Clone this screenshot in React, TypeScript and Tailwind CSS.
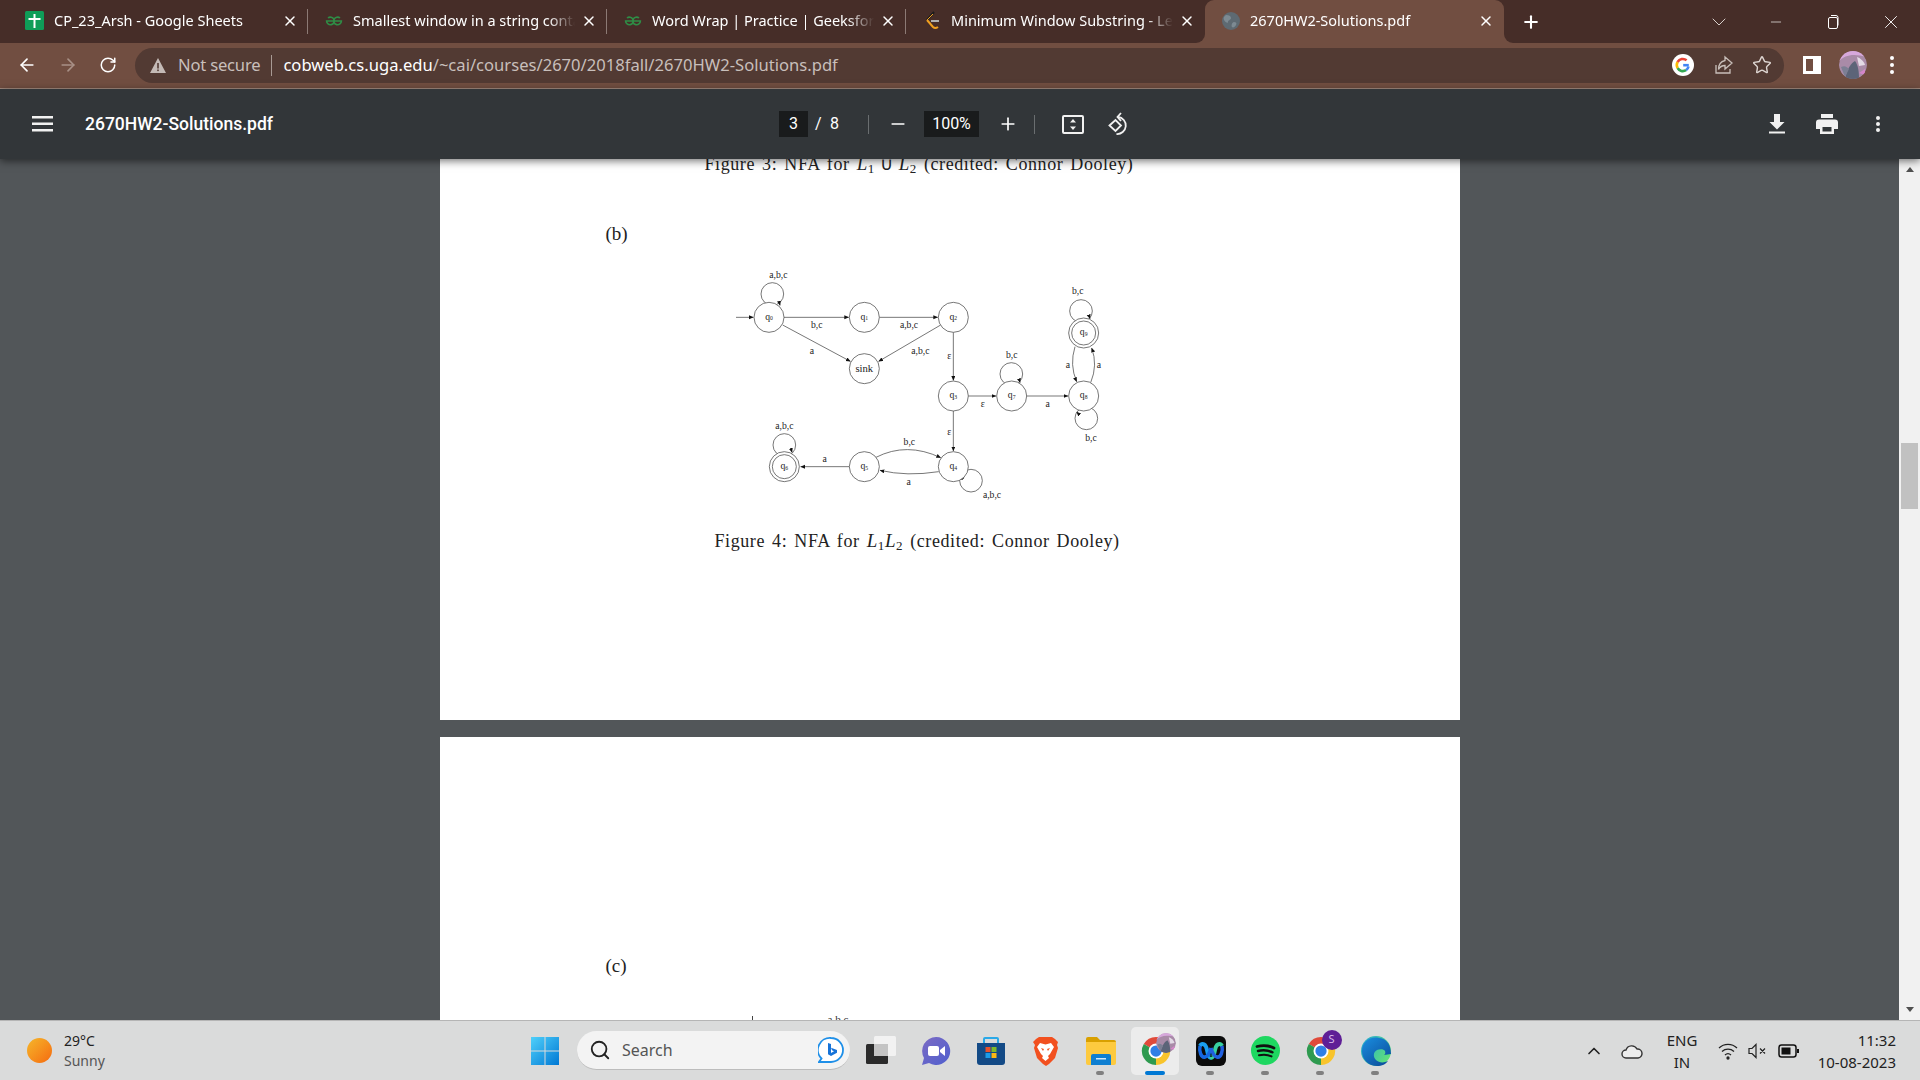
import { ArrowLeft, ArrowRight, RotateCw, Star, Minus, Plus, X, ChevronDown, ChevronUp, Search } from "lucide-react";

const uiFont = "font-['Noto_Sans',sans-serif]";
const pdfFont = "font-['Liberation_Serif',serif]";

const SheetsIcon = () => (
  <svg width="19" height="19" viewBox="0 0 19 19">
    <rect width="19" height="19" rx="1.5" fill="#0f9d58" />
    <path d="M8.5 3h2v4h5v2h-5v8h-2V9h-5V7h5z" fill="#fff" />
  </svg>
);

const GfgIcon = () => (
  <svg width="18" height="10" viewBox="0 0 18 10" fill="none" stroke="#2f8d46" strokeWidth="1.6">
    <path d="M9 5h7.4A3.8 3.8 0 1 1 15 2" />
    <path d="M9 5H1.6A3.8 3.8 0 1 0 3 2" />
  </svg>
);

const LeetIcon = () => (
  <svg width="18" height="22" viewBox="0 0 18 22" fill="none" strokeWidth="2">
    <path d="M11 2 4 10" stroke="#1c1c1c" />
    <path d="M4 10l6 7c1.500 1.500 3 1.500 5 0" stroke="#f0a020" />
    <path d="M8 11h8" stroke="#b0b0b0" />
    <path d="M4 10 10 4" stroke="#f0a020" strokeWidth="1" />
  </svg>
);

const GlobeIcon = () => (
  <svg width="18" height="18" viewBox="0 0 18 18">
    <circle cx="9" cy="9" r="9" fill="#5e6a72" />
    <path d="M4 3c3 0 5 1 5 3s-3 2-3 4-3 0-4-2 0-4 2-5zm8 7c2 0 3 1 2 3s-3 3-4 2 0-5 2-5z" fill="#7d8a92" />
  </svg>
);

const tabs = [
  { title: "CP_23_Arsh - Google Sheets", icon: <SheetsIcon /> },
  { title: "Smallest window in a string containing", icon: <GfgIcon /> },
  { title: "Word Wrap | Practice | GeeksforGeeks", icon: <GfgIcon /> },
  { title: "Minimum Window Substring - LeetCode", icon: <LeetIcon /> },
  { title: "2670HW2-Solutions.pdf", icon: <GlobeIcon />, active: true },
];

const Tab = ({ tab, last }: any) => (
  <div className={`relative flex items-center w-[299px] h-[43px] pl-[16px] pb-[2px] ${tab.active ? "bg-[#714e41] rounded-t-[9px]" : ""}`}>
    {tab.active && (
      <>
        <div className="absolute -left-[9px] bottom-0 w-[9px] h-[9px] bg-[#714e41]">
          <div className="w-full h-full bg-[#462d28] rounded-br-[9px]" />
        </div>
        <div className="absolute -right-[9px] bottom-0 w-[9px] h-[9px] bg-[#714e41]">
          <div className="w-full h-full bg-[#462d28] rounded-bl-[9px]" />
        </div>
      </>
    )}
    <div className="w-[19px] flex justify-center shrink-0">{tab.icon}</div>
    <div className="ml-[10px] w-[222px] overflow-hidden whitespace-nowrap text-[14.5px] text-white [mask-image:linear-gradient(to_right,black_88%,transparent)]">
      {tab.title}
    </div>
    <X size={16} strokeWidth={2.2} className="ml-[6px] text-white shrink-0" />
    {!tab.active && !last && <div className="absolute right-0 top-[9px] h-[25px] w-px bg-[#8c7a75]" />}
  </div>
);

const GoogleG = () => (
  <svg width="22" height="22" viewBox="0 0 22 22">
    <circle cx="11" cy="11" r="11" fill="#fff" />
    <path d="M16.800 11.200h-5.600" stroke="#4285f4" strokeWidth="2.600" />
    <path d="M16.500 12.500a6 6 0 0 1-2.500 3.700" stroke="#4285f4" strokeWidth="2.600" fill="none" />
    <path d="M14 16.200a6 6 0 0 1-8.400-2.200" stroke="#34a853" strokeWidth="2.600" fill="none" />
    <path d="M5.600 14a6 6 0 0 1 0-6" stroke="#fbbc05" strokeWidth="2.600" fill="none" />
    <path d="M5.600 8a6 6 0 0 1 9-1.700" stroke="#ea4335" strokeWidth="2.600" fill="none" />
  </svg>
);

const ChromeLogo = ({ size = 30 }: { size?: number }) => (
  <svg width={size} height={size} viewBox="0 0 32 32">
    <path d="M16 16 3 8.500A15 15 0 0 1 29 8.500Z" fill="#e04a3a" />
    <path d="M16 16 29 8.500A15 15 0 0 1 16 31Z" fill="#f8c42c" />
    <path d="M16 16 16 31A15 15 0 0 1 3 8.500Z" fill="#2e9a4f" />
    <circle cx="16" cy="16" r="8" fill="#fff" />
    <circle cx="16" cy="16" r="6" fill="#2f7fe6" />
  </svg>
);

const Avatar = ({ size }: { size: number }) => (
  <svg width={size} height={size} viewBox="0 0 28 28" className="rounded-full">
    <circle cx="14" cy="14" r="14" fill="#a98ba8" />
    <path d="M0 10C6 4 14 2 28 6V0H0z" fill="#d7a8dc" />
    <path d="M6 28C8 18 12 12 16 10c3 4 4 10 4 18z" fill="#5c6478" />
    <path d="M2 16c4-2 6 0 8 2l-4 8z" fill="#7c7f94" />
    <path d="M18 6c3 1 7 4 8 8l-6 1z" fill="#e3dbe6" />
    <path d="M20 22l6-4v6z" fill="#d486c9" />
  </svg>
);

// nfa drawing, coords are 3x the screen size
const edges = [
  "M108 202H160",
  "M252 202H446",
  "M538 202H713",
  "M248 225L451 334",
  "M722 225L536 334",
  "M760 247V391",
  "M805 438H888",
  "M980 438H1104",
  "M760 483V603",
  "M448 650H302",
  "M528 622Q620 575 722 623",
  "M716 665Q620 680 540 661",
  "M1125 290Q1108 345 1130 395",
  "M1172 398Q1194 345 1175 294",
];

const loops = [
  { cx: 217, cy: 132, end: "M238 158L240 166" },
  { cx: 1143, cy: 183, end: "M1168 200L1170 206" },
  { cx: 934, cy: 372, end: "M958 390L960 398" },
  { cx: 1159, cy: 505, end: "M1136 492L1130 486" },
  { cx: 813, cy: 692, end: "M786 684L780 678" },
  { cx: 253, cy: 585, end: "M274 600L276 607" },
];

const states = [
  { x: 207, y: 202, n: "0" },
  { x: 493, y: 202, n: "1" },
  { x: 760, y: 202, n: "2" },
  { x: 760, y: 438, n: "3" },
  { x: 760, y: 650, n: "4" },
  { x: 493, y: 650, n: "5" },
  { x: 253, y: 650, n: "6", double: true },
  { x: 935, y: 438, n: "7" },
  { x: 1151, y: 438, n: "8" },
  { x: 1151, y: 249, n: "9", double: true },
];

const labels = [
  ["a,b,c", 235, 85],
  ["b,c", 350, 233],
  ["a", 336, 312],
  ["a,b,c", 627, 233],
  ["a,b,c", 661, 312],
  ["ε", 748, 328],
  ["ε", 848, 470],
  ["a", 1043, 470],
  ["b,c", 935, 324],
  ["b,c", 1133, 132],
  ["a", 1104, 353],
  ["a", 1197, 353],
  ["b,c", 1173, 572],
  ["ε", 748, 555],
  ["b,c", 628, 584],
  ["a", 626, 705],
  ["a", 374, 636],
  ["a,b,c", 253, 537],
  ["a,b,c", 876, 745],
];

const NfaDiagram = () => (
  <svg width="440" height="260" viewBox="0 0 1320 780" className="block">
    <defs>
      <marker id="head" markerUnits="userSpaceOnUse" markerWidth="16" markerHeight="14" refX="13" refY="6" orient="auto">
        <path d="M0 0L14 6L0 12z" fill="#111" />
      </marker>
    </defs>
    <g fill="none" stroke="#444" strokeWidth="2.200">
      {loops.map((l) => (
        <circle key={l.cx} cx={l.cx} cy={l.cy} r="34" />
      ))}
      {loops.map((l) => (
        <path key={l.end} d={l.end} markerEnd="url(#head)" />
      ))}
      {edges.map((d) => (
        <path key={d} d={d} markerEnd="url(#head)" />
      ))}
    </g>
    <circle cx="493" cy="356" r="45" fill="#fff" stroke="#444" strokeWidth="2.200" />
    <text x="493" y="366" textAnchor="middle" fontSize="32" fill="#222" fontFamily="Liberation Serif">sink</text>
    {states.map((s) => (
      <g key={s.n}>
        <circle cx={s.x} cy={s.y} r="45" fill="#fff" stroke="#444" strokeWidth="2.200" />
        {s.double && <circle cx={s.x} cy={s.y} r="36" fill="#fff" stroke="#444" strokeWidth="2.200" />}
        <text x={s.x} y={s.y + 7} textAnchor="middle" fontSize="29" fill="#222" fontFamily="Liberation Serif">
          q<tspan fontSize="17" dy="2">{s.n}</tspan>
        </text>
      </g>
    ))}
    {labels.map(([t, x, y]: any, i) => (
      <text key={i} x={x} y={y} textAnchor="middle" fontSize="29" fill="#222" fontFamily="Liberation Serif">
        {t}
      </text>
    ))}
  </svg>
);

const Caption = ({ n, children, className }: any) => (
  <div className={`${pdfFont} text-[18px] leading-[22px] text-[#222] whitespace-nowrap tracking-[0.58px] [word-spacing:2px] ${className}`}>
    Figure {n}: NFA for {children} (credited: Connor Dooley)
  </div>
);

const Ell = ({ n }: { n: number }) => (
  <span>
    <i className="text-[19px]">L</i>
    <sub className="text-[13px] bottom-[-3px]">{n}</sub>
  </span>
);

const WinLogo = () => (
  <svg width="30" height="30" viewBox="0 0 30 30">
    <defs>
      <linearGradient id="win" x1="0" y1="0" x2="1" y2="1">
        <stop offset="0" stopColor="#4fd0fa" />
        <stop offset="1" stopColor="#0078d4" />
      </linearGradient>
    </defs>
    <path d="M1 1h13.500v13.500H1zM15.500 1H29v13.500H15.500zM1 15.500h13.500V29H1zM15.500 15.500H29V29H15.500z" fill="url(#win)" />
  </svg>
);

const BingIcon = () => (
  <svg width="26" height="26" viewBox="0 0 26 26">
    <path d="M13 1a12 12 0 0 1 0 24H1l2.500-3.500A12 12 0 0 1 13 1z" fill="#fff" stroke="#1e8fe8" strokeWidth="1.800" />
    <path d="M10 6l3 1v9l3-1.800-2-1-1-2.500 6 2.200v2.800L13 19l-3-1.800z" fill="#1673d8" />
  </svg>
);

const TaskView = () => (
  <svg width="30" height="29" viewBox="0 0 30 29">
    <rect x="0" y="8" width="22" height="20" rx="1.500" fill="#2b2b2b" />
    <rect x="8" y="0" width="22" height="20" rx="1.500" fill="#f6f6f6" fillOpacity="0.85" />
    <rect x="8" y="8" width="14" height="12" fill="#c4c4c4" />
  </svg>
);

const MeetIcon = () => (
  <svg width="30" height="30" viewBox="0 0 30 30">
    <defs>
      <linearGradient id="meet" x1="0" y1="0" x2="1" y2="1">
        <stop offset="0" stopColor="#7c6bc4" />
        <stop offset="1" stopColor="#4f5fce" />
      </linearGradient>
    </defs>
    <path d="M15 1a14 14 0 1 1-7 26l-7 2 2-7A14 14 0 0 1 15 1z" fill="url(#meet)" />
    <rect x="7" y="10" width="11" height="10" rx="2" fill="#fff" />
    <path d="M19 14l5-4v10l-5-4z" fill="#fff" />
  </svg>
);

const StoreIcon = () => (
  <svg width="30" height="30" viewBox="0 0 30 30">
    <path d="M8 7V3a1 1 0 0 1 1-1h12a1 1 0 0 1 1 1v4" fill="none" stroke="#2aa9e8" strokeWidth="2" />
    <path d="M1 7h28v19a3 3 0 0 1-3 3H4a3 3 0 0 1-3-3z" fill="#134a86" />
    <rect x="9.500" y="11" width="5" height="5" fill="#e8512b" />
    <rect x="15.500" y="11" width="5" height="5" fill="#7fba2c" />
    <rect x="9.500" y="17" width="5" height="5" fill="#1a9be8" />
    <rect x="15.500" y="17" width="5" height="5" fill="#fdb813" />
  </svg>
);

const BraveIcon = () => (
  <svg width="27" height="30" viewBox="0 0 27 30">
    <path d="M7 1h13l3 2 3 3-1 3 1 3-3 10-6 6-3 2-3-2-6-6L2 12l1-3-2-3 3-3z" fill="#f2501f" />
    <path d="M8 7l5.500 1.500L19 7l3 4-4 7-2 2 1 2-3.500 3L10 22l1-2-2-2-4-7z" fill="#fff" />
    <path d="M9 12l3 1-1 2zM18 12l-3 1 1 2z" fill="#f2501f" />
  </svg>
);

const FilesIcon = () => (
  <svg width="30" height="28" viewBox="0 0 30 28">
    <path d="M0 2a2 2 0 0 1 2-2h9l3 3h14a2 2 0 0 1 2 2v3H0z" fill="#d9a000" />
    <path d="M0 5h30v21a2 2 0 0 1-2 2H2a2 2 0 0 1-2-2z" fill="#fdca3f" />
    <path d="M5 19a2 2 0 0 1 2-2h16a2 2 0 0 1 2 2v9H5z" fill="#0f7fd1" />
    <rect x="10" y="21" width="10" height="1.500" fill="#cfe8fb" />
  </svg>
);

const WebexIcon = () => (
  <svg width="30" height="30" viewBox="0 0 30 30">
    <rect width="30" height="30" rx="6" fill="#0b0b0b" />
    <path d="M4 10c2-4 6-2 7 4s3 9 4 7" fill="none" stroke="#1aa0f0" strokeWidth="4" />
    <path d="M26 10c-2-4-6-2-7 4s-3 9-4 7" fill="none" stroke="#38d0a0" strokeWidth="4" />
    <path d="M4 10c-1 5 1 12 5 11s5-6 6-9" fill="none" stroke="#1668e0" strokeWidth="3.500" />
    <path d="M26 10c1 5-1 12-5 11s-5-6-6-9" fill="none" stroke="#2060e0" strokeWidth="3.500" />
  </svg>
);

const SpotifyIcon = () => (
  <svg width="29" height="29" viewBox="0 0 29 29">
    <circle cx="14.500" cy="14.500" r="14.500" fill="#1ed760" />
    <g fill="none" stroke="#111" strokeLinecap="round">
      <path d="M6 10.500c6-1.500 12-1 17 1.500" strokeWidth="2.800" />
      <path d="M7 15c5-1.200 10-.8 14.500 1.300" strokeWidth="2.400" />
      <path d="M8 19.300c4.500-1 9-.6 12.500 1.100" strokeWidth="2" />
    </g>
  </svg>
);

const EdgeIcon = () => (
  <svg width="30" height="30" viewBox="0 0 30 30">
    <defs>
      <linearGradient id="edgeA" x1="0" y1="0" x2="1" y2="0.600">
        <stop offset="0" stopColor="#1fa5d8" />
        <stop offset="1" stopColor="#5fe07a" />
      </linearGradient>
      <linearGradient id="edgeB" x1="0" y1="0" x2="0.800" y2="1">
        <stop offset="0" stopColor="#1a8ee0" />
        <stop offset="1" stopColor="#0c4f9c" />
      </linearGradient>
    </defs>
    <circle cx="15" cy="15" r="15" fill="url(#edgeA)" />
    <path d="M1 15C1 24 8 30 16 30c5 0 9-2 11-5-4 2-9 2-12-1s-3-8 1-10c3-1.500 7-1 8 1 1 3-1 4-1 4l7-1C30 7 24 2 18 2 9 0 1 6 1 15z" fill="url(#edgeB)" />
  </svg>
);

const TaskSlot = ({ children, dot, active }: any) => (
  <div className="relative w-[55px] h-[59px] flex items-center justify-center shrink-0">
    {active && <div className="absolute left-[3px] top-[6px] w-[48px] h-[48px] rounded-[5px] bg-[#ececec]" />}
    <div className="relative">{children}</div>
    {dot && !active && <div className="absolute left-[23px] bottom-[5px] w-[8px] h-[4px] rounded-full bg-[#808080]" />}
    {active && <div className="absolute left-[17px] bottom-[5px] w-[20px] h-[4px] rounded-full bg-[#0078d4]" />}
  </div>
);

export default function App() {
  return (
    <div className={`w-[1920px] h-[1080px] overflow-hidden flex flex-col ${uiFont}`}>
      {/* Tab strip */}
      <div className="h-[43px] bg-[#462d28] flex items-center pl-[9px] shrink-0">
        {tabs.map((t, i) => (
          <Tab key={t.title} tab={t} last={i === 3} />
        ))}
        <Plus size={20} strokeWidth={2.5} className="ml-[17px] text-white" />
        <ChevronDown size={24} strokeWidth={1} className="ml-[166px] text-[#d8cfcb]" />
        <Minus size={16} strokeWidth={1} className="ml-[37px] text-white" />
        <svg width="14" height="14" viewBox="0 0 14 14" fill="none" stroke="#fff" className="ml-[42px]">
          <rect x="2.500" y="2.500" width="9" height="11" rx="1.500" />
          <path d="M5 .5h5a2 2 0 0 1 2 2v8" />
        </svg>
        <X size={22} strokeWidth={1} className="ml-[40px] text-white" />
      </div>

      {/* Address bar */}
      <div className="h-[46px] bg-[#714e41] border-b border-[#a48c80] flex items-center shrink-0 pb-[1px]">
        <ArrowLeft size={20} strokeWidth={2} className="ml-[17px] text-white" />
        <ArrowRight size={20} strokeWidth={2} className="ml-[21px] text-[#a89086]" />
        <RotateCw size={18} strokeWidth={2} className="ml-[21px] text-white" />
        <div className="ml-[18px] w-[1649px] h-[35px] rounded-full bg-[#523a33] flex items-center pl-[15px] pr-[12px]">
          <svg width="16" height="15" viewBox="0 0 16 15">
            <path d="M8 0l8 15H0z" fill="#c4bab6" />
            <rect x="7.200" y="5" width="1.600" height="5.500" fill="#523a33" />
            <rect x="7.200" y="11.500" width="1.600" height="1.600" fill="#523a33" />
          </svg>
          <span className="ml-[12px] text-[16.6px] text-[#c8bfbb] tracking-[-0.2px]">Not secure</span>
          <div className="ml-[11px] w-px h-[21px] bg-[#a89a94]" />
          <span className="ml-[11px] text-[16.6px] text-white whitespace-nowrap">
            cobweb.cs.uga.edu<span className="text-[#c8bfbb]">/~cai/courses/2670/2018fall/2670HW2-Solutions.pdf</span>
          </span>
          <div className="ml-auto flex items-center gap-[18px]">
            <GoogleG />
            <svg width="22" height="22" viewBox="0 0 22 22" fill="none" stroke="#c9bfba" strokeWidth="1.300">
              <path d="M4 11v8h14v-4" />
              <path d="M13 3l7 6-7 6v-3.500c-3 0-5 1-6.500 4 0-5 2.500-8 6.500-9z" />
            </svg>
            <Star size={20} strokeWidth={1.700} className="text-[#ddd5d1]" />
          </div>
        </div>
        <svg width="18" height="18" viewBox="0 0 18 18" className="ml-[19px]">
          <path d="M0 0h18v18H0z" fill="#fff" />
          <rect x="3" y="3" width="7" height="12" fill="#714e41" />
        </svg>
        <div className="ml-[18px] h-[28px]"><Avatar size={28} /></div>
        <svg width="4" height="18" viewBox="0 0 4 18" fill="#fff" className="ml-[23px]">
          <circle cx="2" cy="2" r="2" />
          <circle cx="2" cy="9" r="2" />
          <circle cx="2" cy="16" r="2" />
        </svg>
      </div>

      {/* PDF toolbar */}
      <div className="relative z-10 h-[70px] bg-[#323639] flex items-center shrink-0 text-white shadow-[0_2px_8px_rgba(0,0,0,0.55)] font-['Roboto',sans-serif]">
        <div className="w-[779px] flex items-center">
          <svg width="21" height="16" viewBox="0 0 21 16" fill="#f1f1f1" className="ml-[32px]">
            <rect width="21" height="2.500" />
            <rect y="6.500" width="21" height="2.500" />
            <rect y="13" width="21" height="2.500" />
          </svg>
          <span className="ml-[32px] text-[17.5px] font-medium">2670HW2-Solutions.pdf</span>
        </div>
        <div className="w-[29px] h-[26px] bg-[#191b1c] flex items-center justify-center text-[16px]">3</div>
        <span className="ml-[7px] text-[16px] w-[24px] flex justify-between"><span>/</span><span>8</span></span>
        <div className="ml-[29px] w-px h-[19px] bg-[#6a6e70]" />
        <Minus size={20} strokeWidth={2} className="ml-[19px]" />
        <div className="ml-[16px] w-[55px] h-[26px] bg-[#191b1c] flex items-center justify-center text-[16px]">100%</div>
        <Plus size={20} strokeWidth={2} className="ml-[19px]" />
        <div className="ml-[16px] w-px h-[19px] bg-[#6a6e70]" />
        <svg width="22" height="19" viewBox="0 0 22 19" fill="none" className="ml-[27px]">
          <rect x="1" y="1" width="20" height="17" rx="1" stroke="#f1f1f1" strokeWidth="2" />
          <path d="M11 4l3 3.500H8zM11 15l-3-3.500h6z" fill="#f1f1f1" />
        </svg>
        <svg width="22" height="24" viewBox="0 0 22 24" fill="none" stroke="#f1f1f1" strokeWidth="1.800" className="ml-[24px]">
          <path d="M1.500 13.500 7.500 8l5.500 5.500-5.500 5.500z" />
          <path d="M10 5a8.500 8.500 0 1 1-1.500 17" />
          <path d="M13 1 9.500 5l3.500 4" />
        </svg>
        <div className="ml-auto flex items-center">
          <svg width="16" height="20" viewBox="0 0 16 20" fill="#f1f1f1">
            <path d="M5 0h6v8h4.500L8 15.500.5 8H5z" />
            <rect x="0" y="17.500" width="16" height="2" />
          </svg>
          <svg width="22" height="20" viewBox="0 0 22 20" fill="#f1f1f1" className="ml-[31px]">
            <path d="M5 0h12v4H5z" />
            <path d="M3 5.500h16a3 3 0 0 1 3 3V15h-4v5H4v-5H0V8.500a3 3 0 0 1 3-3zM6.500 13v4.500h9V13z" fillRule="evenodd" />
          </svg>
          <svg width="4" height="16" viewBox="0 0 4 16" fill="#f1f1f1" className="ml-[38px] mr-[40px]">
            <circle cx="2" cy="2" r="2" />
            <circle cx="2" cy="8" r="2" />
            <circle cx="2" cy="14" r="2" />
          </svg>
        </div>
      </div>

      {/* Viewer */}
      <div className="h-[861px] flex shrink-0 overflow-hidden">
        <div className="flex-1 bg-[#525659] flex flex-col items-center gap-[17px] overflow-hidden">
          <div className="w-[1020px] h-[561px] bg-white shrink-0 pl-[165px]">
            <Caption n={3} className="-mt-[6px] ml-[100px]">
              <Ell n={1} /><span className="-mx-[2px]"> ∪ </span><Ell n={2} />
            </Caption>
            <div className={`${pdfFont} mt-[48px] h-[22px] pl-[1px] text-[19px] leading-[22px] text-[#222]`}>(b)</div>
            <div className="mt-[5px] ml-[95px]">
              <NfaDiagram />
            </div>
            <Caption n={4} className="mt-[20px] ml-[110px]">
              <Ell n={1} /><Ell n={2} />
            </Caption>
          </div>
          <div className="w-[1020px] h-[400px] bg-white shrink-0 pl-[165px]">
            <div className={`${pdfFont} pt-[218px] h-[277px] pl-[1px] text-[19px] leading-[22px] text-[#222]`}>(c)</div>
            <div className={`${pdfFont} flex items-start ml-[147px] text-[11px] leading-[10px] text-[#333]`}>
              <div className="w-px h-[6px] bg-[#444] mt-[2px]" />
              <span className="ml-[75px]">a,b,c</span>
            </div>
          </div>
        </div>
        <div className="w-[21px] bg-[#f1f1f1] flex flex-col items-center shrink-0">
          <div className="h-[21px] flex items-center justify-center">
            <div className="w-0 h-0 border-x-[4.5px] border-x-transparent border-b-[5px] border-b-[#505050]" />
          </div>
          <div className="mt-[263px] w-[17px] h-[66px] bg-[#c1c1c1]" />
          <div className="mt-auto h-[21px] flex items-center justify-center">
            <div className="w-0 h-0 border-x-[4.5px] border-x-transparent border-t-[5px] border-t-[#505050]" />
          </div>
        </div>
      </div>

      {/* Taskbar */}
      <div className="h-[60px] bg-[#dadbdb] border-t border-[#b5b5b5] flex items-center shrink-0">
        <div className="w-[517px] flex items-center">
          <div className="ml-[27px] w-[25px] h-[25px] rounded-full bg-gradient-to-br from-[#f4b62a] to-[#f4690f]" />
          <div className="ml-[12px] flex flex-col text-[14px] leading-[20px]">
            <span className="text-[#222]">29°C</span>
            <span className="text-[#555]">Sunny</span>
          </div>
        </div>
        <div className="w-[55px] flex justify-center"><WinLogo /></div>
        <div className="ml-[5px] w-[273px] h-[39px] rounded-full bg-[#f3f3f3] border-b border-[#bcbcbc] flex items-center pl-[12px] pr-[6px]">
          <Search size={22} strokeWidth={2} className="text-[#222]" />
          <span className="ml-[11px] text-[16px] text-[#555]">Search</span>
          <div className="ml-auto"><BingIcon /></div>
        </div>
        <div className="ml-[3px] flex">
          <TaskSlot><TaskView /></TaskSlot>
          <TaskSlot><MeetIcon /></TaskSlot>
          <TaskSlot><StoreIcon /></TaskSlot>
          <TaskSlot><BraveIcon /></TaskSlot>
          <TaskSlot dot><FilesIcon /></TaskSlot>
          <TaskSlot active>
            <ChromeLogo />
            <div className="absolute -top-[3px] left-[15px]"><Avatar size={20} /></div>
          </TaskSlot>
          <TaskSlot dot><WebexIcon /></TaskSlot>
          <TaskSlot dot><SpotifyIcon /></TaskSlot>
          <TaskSlot dot>
            <ChromeLogo />
            <div className="absolute -top-[6px] left-[16px] w-[20px] h-[20px] rounded-full bg-[#5f1f96] flex items-center justify-center text-[11px] text-[#d7b8ea]">S</div>
          </TaskSlot>
          <TaskSlot dot><EdgeIcon /></TaskSlot>
        </div>
        <ChevronUp size={20} strokeWidth={2} className="ml-[181px] text-[#222]" />
        <svg width="22" height="18" viewBox="0 0 22 18" fill="none" stroke="#333" strokeWidth="1.400" className="ml-[17px]">
          <path d="M5 16a4 4 0 0 1 0-8 6 6 0 0 1 11-1 4.500 4.500 0 0 1 1 9z" fill="#ededed" />
        </svg>
        <div className="ml-[14px] w-[50px] flex flex-col items-center text-[15px] leading-[22px] text-[#222]">
          <span>ENG</span>
          <span>IN</span>
        </div>
        <svg width="20" height="18" viewBox="0 0 20 18" fill="none" stroke="#222" strokeWidth="1.300" className="ml-[11px]">
          <path d="M1 6a13 13 0 0 1 18 0M4 9.500a9 9 0 0 1 12 0M7 13a4.500 4.500 0 0 1 6 0" />
          <circle cx="10" cy="16" r="1" fill="#222" />
        </svg>
        <svg width="20" height="16" viewBox="0 0 20 16" fill="none" stroke="#222" strokeWidth="1.200" className="ml-[10px]">
          <path d="M1 5.500h3L8 1.500v13l-4-4H1zM12 5.500l5 5M17 5.500l-5 5" />
        </svg>
        <svg width="22" height="14" viewBox="0 0 22 14" className="ml-[10px]">
          <rect x="1" y="1" width="17" height="12" rx="2.500" fill="none" stroke="#111" strokeWidth="1.500" />
          <rect x="3.500" y="3.500" width="9" height="7" fill="#111" />
          <rect x="19" y="5" width="2" height="4" fill="#111" />
        </svg>
        <div className="ml-auto mr-[24px] flex flex-col items-end text-[15px] leading-[22px] text-[#222]">
          <span>11:32</span>
          <span>10-08-2023</span>
        </div>
      </div>
    </div>
  );
}
